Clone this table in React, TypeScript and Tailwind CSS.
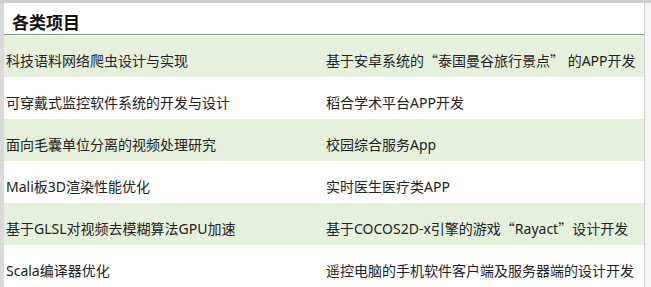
const rows = [
  ['科技语料网络爬虫设计与实现', '基于安卓系统的“泰国曼谷旅行景点” 的APP开发'],
  ['可穿戴式监控软件系统的开发与设计', '稻合学术平台APP开发'],
  ['面向毛囊单位分离的视频处理研究', '校园综合服务App'],
  ['Mali板3D渲染性能优化', '实时医生医疗类APP'],
  ['基于GLSL对视频去模糊算法GPU加速', '基于COCOS2D-x引擎的游戏“Rayact”设计开发'],
  ['Scala编译器优化', '遥控电脑的手机软件客户端及服务器端的设计开发'],
]

// curly quotes should be full width like the CJK font draws them
function Cell({ text }: { text: string }) {
  return (
    <>
      {text.split(/([“”])/).map((part, i) =>
        part === '“' || part === '”' ? (
          <span key={i} style={{ fontFamily: '"Noto Sans CJK SC", sans-serif' }}>{part}</span>
        ) : (
          <span key={i}>{part}</span>
        )
      )}
    </>
  )
}

export default function App() {
  return (
    <div
      className="w-[651px] h-[287px] overflow-hidden bg-[#f5f5f5] flex border-t-[3px] border-[#cdcdcd]"
      style={{ fontFamily: '"Noto Sans", "Noto Sans CJK SC", sans-serif' }}
    >
      <div className="w-[4px] bg-[#d9d9d9]" />
      {/* table */}
      <div className="w-[641px] bg-white border-r border-[#cfcfcf] flex flex-col">
        <div className="h-[37px] flex items-center pl-[8px] pt-[7px] border-b border-[#8e9c8e]">
          <h1 className="text-[17px] font-bold text-[#111] leading-none">各类项目</h1>
        </div>
        {rows.map((r, i) => (
          <div
            key={i}
            className={`h-[42px] shrink-0 flex items-center pt-[9px] text-[14px] text-[#222] leading-none ${i % 2 === 0 ? 'bg-[#e6f1dc]' : 'bg-white'}`}
          >
            <span className="w-[316px] pl-[2px] whitespace-nowrap">{r[0]}</span>
            <span className="pl-[6px] whitespace-nowrap"><Cell text={r[1]} /></span>
          </div>
        ))}
      </div>
    </div>
  )
}
